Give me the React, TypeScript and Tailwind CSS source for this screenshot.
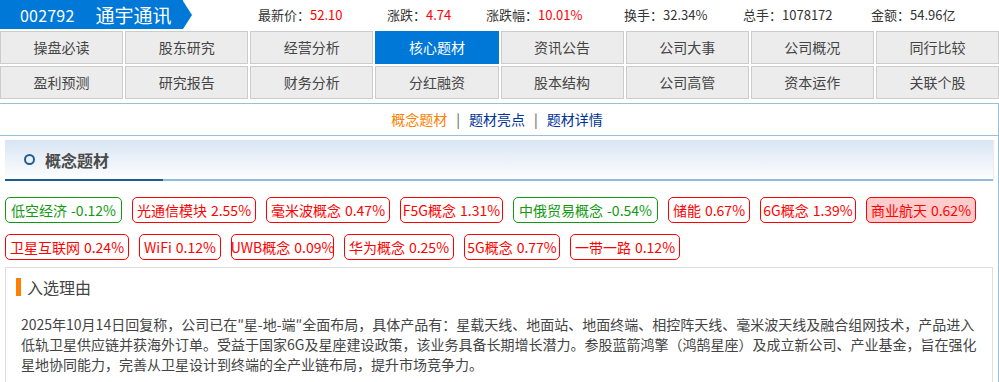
const font = "font-['Noto_Sans_CJK_SC','Noto_Sans',sans-serif]";

interface Stat {
    label: string;
    value: string;
    red: boolean;
    w: string;
}

interface Tag {
    name: string;
    change: string;
    w: string;
    tone: 'up' | 'down' | 'hot';
}

const stats: Stat[] = [
    { label: '最新价', value: '52.10', red: true, w: 'w-[129px]' },
    { label: '涨跌', value: '4.74', red: true, w: 'w-[99px]' },
    { label: '涨跌幅', value: '10.01%', red: true, w: 'w-[138px]' },
    { label: '换手', value: '32.34%', red: false, w: 'w-[119px]' },
    { label: '总手', value: '1078172', red: false, w: 'w-[128px]' },
    { label: '金额', value: '54.96亿', red: false, w: 'w-[110px]' },
];

const navs = [
    '操盘必读', '股东研究', '经营分析', '核心题材', '资讯公告', '公司大事', '公司概况', '同行比较',
    '盈利预测', '研究报告', '财务分析', '分红融资', '股本结构', '公司高管', '资本运作', '关联个股',
];

const tags: Tag[] = [
    { name: '低空经济', change: '-0.12%', w: 'w-[117px]', tone: 'down' },
    { name: '光通信模块', change: '2.55%', w: 'w-[124px]', tone: 'up' },
    { name: '毫米波概念', change: '0.47%', w: 'w-[124px]', tone: 'up' },
    { name: 'F5G概念', change: '1.31%', w: 'w-[103px]', tone: 'up' },
    { name: '中俄贸易概念', change: '-0.54%', w: 'w-[145px]', tone: 'down' },
    { name: '储能', change: '0.67%', w: 'w-[82px]', tone: 'up' },
    { name: '6G概念', change: '1.39%', w: 'w-[96px]', tone: 'up' },
    { name: '商业航天', change: '0.62%', w: 'w-[110px]', tone: 'hot' },
    { name: '卫星互联网', change: '0.24%', w: 'w-[124px]', tone: 'up' },
    { name: 'WiFi', change: '0.12%', w: 'w-[82px]', tone: 'up' },
    { name: 'UWB概念', change: '0.09%', w: 'w-[103px]', tone: 'up' },
    { name: '华为概念', change: '0.25%', w: 'w-[110px]', tone: 'up' },
    { name: '5G概念', change: '0.77%', w: 'w-[96px]', tone: 'up' },
    { name: '一带一路', change: '0.12%', w: 'w-[110px]', tone: 'up' },
];

const toneClass = {
    up: 'border-[#ff0000] text-[#ff0000] bg-white',
    down: 'border-[#119911] text-[#119911] bg-white',
    hot: 'border-[#ff0000] text-[#ff0000] bg-[#ffcccc]',
};

export default function App() {
    return (
        <div className={`${font} h-[382px] w-[999px] overflow-hidden bg-white text-[#333]`}>
            {/* 顶部：代码 + 行情 */}
            <div className="flex h-[29px] items-center">
                <div className="flex h-[29px] w-[183px] items-center bg-[#0078d7] pl-[20px] text-white">
                    <span className="text-[16px] leading-none tracking-[0.2px]">002792</span>
                    <span className="ml-[21px] text-[19px] leading-none">通宇通讯</span>
                </div>
                <div className="h-0 w-0 border-y-[14.5px] border-l-[9px] border-y-transparent border-l-[#0078d7]" />
                <div className="ml-[66px] flex text-[13px]">
                    {stats.map((s) => (
                        <div key={s.label} className={`${s.w} whitespace-nowrap`}>
                            <span className="text-[#333]">{s.label}：</span>
                            <span className={s.red ? 'text-[#ff0000]' : 'text-[#333]'}>{s.value}</span>
                        </div>
                    ))}
                </div>
            </div>

            {/* 导航 */}
            <div className="mt-[2px] grid grid-cols-8 gap-[2px]">
                {navs.map((n) => (
                    <div
                        key={n}
                        className={
                            n === '核心题材'
                                ? 'flex h-[33px] items-center justify-center border border-[#0078d7] bg-[#0078d7] text-[14px] text-white'
                                : 'flex h-[33px] items-center justify-center border border-[#cccccc] bg-[#ececec] text-[14px] text-[#444]'
                        }
                    >
                        {n}
                    </div>
                ))}
            </div>

            <div className="mt-[4px] h-[300px] border-r border-t border-[#9cbfd8]">
                <div className="flex h-[32px] items-center justify-center gap-[9px] border-b border-[#9cbfd8] pr-[4px] text-[14px]">
                    <span className="text-[#ff7f00]">概念题材</span>
                    <span className="text-[#555]">|</span>
                    <span className="text-[#003399]">题材亮点</span>
                    <span className="text-[#555]">|</span>
                    <span className="text-[#003399]">题材详情</span>
                </div>

                <div className="px-[5px] pt-[4px]">
                    <div className="flex h-[41px] flex-col bg-linear-to-b from-[#d8e5f3] to-white shadow-[1px_0_1px_rgba(0,0,0,0.08)]">
                        <div className="flex flex-1 items-center pl-[19px]">
                            <span className="h-[11px] w-[11px] rounded-full border-[2.5px] border-[#1f5f8f]" />
                            <span className="ml-[10px] text-[16px] font-bold text-[#4a4a4a]">概念题材</span>
                        </div>
                        <div className="flex h-[2px]">
                            <div className="w-[158px] bg-[#1d5f8c]" />
                            <div className="flex-1 bg-[#93bcd8]" />
                        </div>
                    </div>

                    <div className="mt-[16px] flex flex-wrap gap-x-[10px] gap-y-[11px]">
                        {tags.map((t) => (
                            <div
                                key={t.name}
                                className={`${t.w} ${toneClass[t.tone]} flex h-[26px] items-center justify-center whitespace-nowrap rounded-[5px] border text-[14px]`}
                            >
                                {t.name}
                                <span className="ml-[4px]">{t.change}</span>
                            </div>
                        ))}
                    </div>

                    <div className="mt-[7px] border border-[#dddddd] pb-[10px]">
                        <div className="mt-[9px] flex items-center pl-[10px]">
                            <span className="h-[18px] w-[5px] bg-[#ff8000]" />
                            <span className="ml-[6px] text-[16px] leading-[20px] text-[#444]">入选理由</span>
                        </div>
                        <p className="mt-[17px] pl-[15px] pr-[4px] text-[14px] leading-[20px] text-[#444]">
                            2025年10月14日回复称，公司已在″星-地-端″全面布局，具体产品有：星载天线、地面站、地面终端、相控阵天线、毫米波天线及融合组网技术，产品进入
                            <br />
                            低轨卫星供应链并获海外订单。受益于国家6G及星座建设政策，该业务具备长期增长潜力。参股蓝箭鸿擎（鸿鹄星座）及成立新公司、产业基金，旨在强化
                            <br />
                            星地协同能力，完善从卫星设计到终端的全产业链布局，提升市场竞争力。
                        </p>
                    </div>
                </div>
            </div>
        </div>
    );
}
